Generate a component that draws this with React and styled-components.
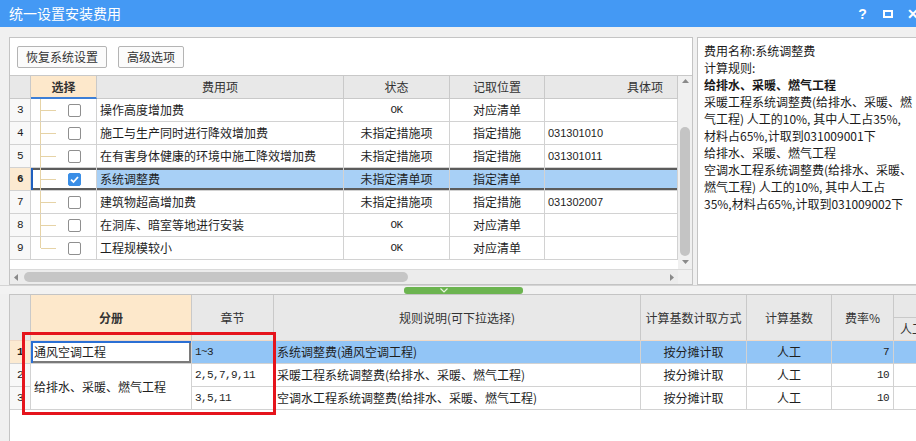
import React from 'react';
import styled, { createGlobalStyle } from 'styled-components';

const CJK = `"Noto Sans CJK SC", "Microsoft YaHei", sans-serif`;
const MONO = `"Liberation Mono", "Noto Sans CJK SC", monospace`;
const LAT = `"Liberation Sans", "Noto Sans CJK SC", sans-serif`;

const Global = createGlobalStyle`
  html, body { margin: 0; padding: 0; background: #f0f0f0; overflow: hidden; }
  body { font-family: ${CJK}; font-size: 12px; color: #222; }
  * { box-sizing: border-box; }
`;

const Window = styled.div`
  width: 916px;
  height: 441px;
  display: flex;
  flex-direction: column;
  overflow: hidden;
  background: #f0f0f0;
`;

const TitleBar = styled.div`
  height: 27px;
  flex: none;
  background: #4499f4;
  display: flex;
  align-items: center;
  padding-left: 9px;
  color: #fff;
  overflow: hidden;
`;

const Title = styled.div`
  flex: 1;
  font-size: 14px;
  line-height: 27px;
`;

const TitleButtons = styled.div`
  display: flex;
  flex: none;
  width: 75px;
  margin-right: -9px;
`;

const TitleButton = styled.div`
  width: 25px;
  height: 27px;
  display: flex;
  align-items: center;
  justify-content: center;
  font-family: ${LAT};
  font-weight: bold;
  font-size: 14px;
  color: #fff;
`;

const Main = styled.div`
  display: flex;
  flex-direction: column;
  padding: 10px 0 0 9px;
  flex: 1;
  min-height: 0;
`;

const TopRow = styled.div`
  display: flex;
  gap: 4px;
  height: 248px;
  flex: none;
`;

const LeftPanel = styled.div`
  width: 684px;
  flex: none;
  border: 1px solid #c4c4c4;
  background: #fff;
  display: flex;
  flex-direction: column;
`;

const Toolbar = styled.div`
  height: 38px;
  flex: none;
  display: flex;
  align-items: flex-start;
  gap: 11px;
  padding: 8px 0 0 7px;
  border-bottom: 1px solid #c8c8c8;
  background: #fff;
`;

const Button = styled.div`
  height: 22px;
  padding: 0 8px;
  border: 1px solid #b4b4b4;
  border-radius: 2px;
  background: #fbfbfb;
  display: flex;
  align-items: center;
  font-size: 12px;
  line-height: 1;
  color: #333;
`;

const GridWrap = styled.div`
  display: flex;
  height: 193px;
  flex: none;
`;

const TopGrid = styled.div`
  display: grid;
  grid-template-columns: 21px 66px 247px 106px 95px 133px;
  grid-auto-rows: 23px;
  align-content: start;
  width: 668px;
  flex: none;
`;

const Cell = styled.div`
  position: relative;
  display: flex;
  align-items: center;
  justify-content: ${p => (p.$align === 'center' ? 'center' : p.$align === 'right' ? 'flex-end' : 'flex-start')};
  padding: 0 ${p => p.$pad ?? 3}px;
  border-right: 1px solid #d2d2d2;
  border-bottom: 1px solid #d2d2d2;
  background: ${p => p.$bg || '#fff'};
  white-space: nowrap;
  overflow: hidden;
  line-height: 16px;
  font-size: ${p => p.$size || 12}px;
  font-family: ${p => (p.$font === 'mono' ? MONO : p.$font === 'lat' ? LAT : CJK)};
  font-weight: ${p => (p.$bold ? 'bold' : 'normal')};
  color: #1e1e1e;
  letter-spacing: ${p => (p.$font === 'mono' ? '-0.6px' : '0')};
  box-shadow: ${p => p.$shadow || 'none'};
`;

const HeadCell = styled(Cell)`
  background: ${p => (p.$active ? '#fde8cb' : '#e8e8e8')};
  border-right: 1px solid #c9c9c9;
  border-bottom: ${p => (p.$active ? '2px solid #3d7fd6' : '1px solid #c9c9c9')};
  color: #333;
  grid-row: ${p => (p.$span ? `span ${p.$span}` : 'auto')};
`;

const TreeGuide = styled.span`
  position: absolute;
  left: 9px;
  top: 0;
  height: ${p => (p.$last ? '50%' : '100%')};
  width: 16px;
  border-left: 1px solid #e6d3a6;
  &::after {
    content: '';
    position: absolute;
    left: 0;
    top: ${p => (p.$last ? '100%' : '50%')};
    width: 15px;
    border-top: 1px solid #e6d3a6;
  }
`;

const CheckBox = styled.span`
  width: 13px;
  height: 13px;
  margin-left: 37px;
  border: 1px solid ${p => (p.$on ? '#3a8ee6' : '#8f8f8f')};
  border-radius: 2px;
  background: ${p => (p.$on ? '#3a8ee6' : '#fff')};
  display: flex;
  align-items: center;
  justify-content: center;
`;

const VScroll = styled.div`
  width: 14px;
  flex: none;
  background: #f0f0f0;
  display: flex;
  flex-direction: column;
  align-items: center;
  padding: 3px 0 2px;
`;

const VThumb = styled.div`
  width: 10px;
  flex: none;
  height: 129px;
  margin: 44px 0 4px;
  border-radius: 5px;
  background: #c4c4c4;
`;

const HScrollRow = styled.div`
  display: flex;
  height: 15px;
  flex: none;
  border-top: 1px solid #dadada;
  background: #ececec;
`;

const HScroll = styled.div`
  width: 668px;
  display: flex;
  align-items: center;
  padding: 0 4px;
`;

const HThumb = styled.div`
  width: 384px;
  height: 10px;
  margin-left: 6px;
  border-radius: 5px;
  background: #c6c6c6;
`;

const Spacer = styled.div`
  flex: 1;
`;

const Corner = styled.div`
  width: 14px;
  background: #f0f0f0;
`;

const InfoPanel = styled.div`
  flex: 1;
  min-width: 0;
  background: #fff;
  border: 1px solid #c4c4c4;
  border-right: none;
  padding: 4px 0 0 6px;
  overflow: hidden;
`;

const InfoLine = styled.div`
  line-height: 17px;
  font-size: 12px;
  white-space: nowrap;
  color: #1a1a1a;
  font-weight: ${p => (p.$bold ? 'bold' : 'normal')};
`;

const Splitter = styled.div`
  height: 9px;
  flex: none;
  padding: 1px 0 0 395px;
  margin-left: -9px;
  padding-left: 404px;
  border-top: 1px solid #d4d4d4;
  background: #f2f2f2;
`;

const Handle = styled.div`
  width: 119px;
  height: 7px;
  border-radius: 3px;
  background: #6cb450;
  display: flex;
  align-items: center;
  padding-left: 36px;
`;

const BottomPanel = styled.div`
  position: relative;
  flex: 1;
  background: #fff;
  border-top: 1px solid #c4c4c4;
  border-left: 1px solid #c4c4c4;
  overflow: hidden;
`;

const BottomGrid = styled.div`
  display: grid;
  grid-template-columns: 21px 161px 82px 367px 106px 85px 62px 100px;
  grid-template-rows: 23px 23px repeat(3, 23px);
  width: 984px;
`;

const BHead = styled(HeadCell)`
  border-bottom: 1px solid ${p => (p.$sub ? '#c9c9c9' : '#efd9c6')};
  justify-content: ${p => (p.$left ? 'flex-start' : 'center')};
`;

const Highlight = styled.div`
  position: absolute;
  left: 12px;
  top: 37px;
  width: 254px;
  height: 83px;
  border: 3px solid #e5141c;
  pointer-events: none;
`;

const Arrow = ({ dir }) => {
  const pts = {
    up: '0,4 3.5,0 7,4',
    down: '0,0 3.5,4 7,0',
    left: '4,0 0,3.5 4,7',
    right: '0,0 4,3.5 0,7',
  }[dir];
  const vertical = dir === 'up' || dir === 'down';
  return (
    <svg width={vertical ? 7 : 4} height={vertical ? 4 : 7} viewBox={vertical ? '0 0 7 4' : '0 0 4 7'}>
      <polygon points={pts} fill="#8a8a8a" />
    </svg>
  );
};

const Tick = () => (
  <svg width="11" height="11" viewBox="0 0 11 11">
    <polyline points="2,5.6 4.5,8 9,3" fill="none" stroke="#fff" strokeWidth="1.8" />
  </svg>
);

const topRows = [
  { n: 3, name: '操作高度增加费', status: 'OK', pos: '对应清单', item: '' },
  { n: 4, name: '施工与生产同时进行降效增加费', status: '未指定措施项', pos: '指定措施', item: '031301010' },
  { n: 5, name: '在有害身体健康的环境中施工降效增加费', status: '未指定措施项', pos: '指定措施', item: '031301011' },
  { n: 6, name: '系统调整费', status: '未指定清单项', pos: '指定清单', item: '', checked: true, current: true },
  { n: 7, name: '建筑物超高增加费', status: '未指定措施项', pos: '指定措施', item: '031302007' },
  { n: 8, name: '在洞库、暗室等地进行安装', status: 'OK', pos: '对应清单', item: '' },
  { n: 9, name: '工程规模较小', status: 'OK', pos: '对应清单', item: '', last: true },
];

const bottomRows = [
  { n: 1, ch: '1~3', rule: '系统调整费(通风空调工程)', way: '按分摊计取', base: '人工', rate: '7', current: true },
  { n: 2, ch: '2,5,7,9,11', rule: '采暖工程系统调整费(给排水、采暖、燃气工程)', way: '按分摊计取', base: '人工', rate: '10' },
  { n: 3, ch: '3,5,11', rule: '空调水工程系统调整费(给排水、采暖、燃气工程)', way: '按分摊计取', base: '人工', rate: '10' },
];

const infoLines = [
  { t: '费用名称:系统调整费' },
  { t: '计算规则:' },
  { t: '给排水、采暖、燃气工程', bold: true },
  { t: '采暖工程系统调整费(给排水、采暖、燃' },
  { t: '气工程) 人工的10%, 其中人工占35%,' },
  { t: '材料占65%,计取到031009001下' },
  { t: '给排水、采暖、燃气工程' },
  { t: '空调水工程系统调整费(给排水、采暖、' },
  { t: '燃气工程) 人工的10%, 其中人工占' },
  { t: '35%,材料占65%,计取到031009002下' },
];

const SEL = '#a8d0f6';
const FOCUS = 'inset 0 2px 0 #5c5c5c, inset 0 -2px 0 #5c5c5c';

export default function App() {
  return (
    <Window>
      <Global />
      <TitleBar>
        <Title>统一设置安装费用</Title>
        <TitleButtons>
          <TitleButton>?</TitleButton>
          <TitleButton>
            <svg width="10" height="8" viewBox="0 0 10 8">
              <rect x="1" y="1" width="8" height="6" fill="none" stroke="#fff" strokeWidth="2" />
            </svg>
          </TitleButton>
          <TitleButton>✕</TitleButton>
        </TitleButtons>
      </TitleBar>
      <Main>
        <TopRow>
          <LeftPanel>
            <Toolbar>
              <Button>恢复系统设置</Button>
              <Button>高级选项</Button>
            </Toolbar>
            <GridWrap>
              <TopGrid>
                <HeadCell />
                <HeadCell $align="center" $bold $active>选择</HeadCell>
                <HeadCell $align="center">费用项</HeadCell>
                <HeadCell $align="center">状态</HeadCell>
                <HeadCell $align="center">记取位置</HeadCell>
                <HeadCell $align="right" $pad={14}>具体项</HeadCell>
                {topRows.map(r => (
                  <React.Fragment key={r.n}>
                    <Cell
                      $align="center"
                      $font="mono"
                      $size={11}
                      $bold={r.current}
                      $bg={r.current ? '#fcead1' : '#f8f8f8'}
                    >
                      {r.n}
                    </Cell>
                    <Cell
                      $pad={0}
                      $shadow={r.current ? `inset 2px 0 0 #1f5fbf, ${FOCUS}` : undefined}
                    >
                      <TreeGuide $last={r.last} />
                      <CheckBox $on={r.checked}>{r.checked && <Tick />}</CheckBox>
                    </Cell>
                    <Cell $bg={r.current ? SEL : undefined} $shadow={r.current ? FOCUS : undefined}>
                      {r.name}
                    </Cell>
                    <Cell
                      $align="center"
                      $font={r.status === 'OK' ? 'mono' : undefined}
                      $size={r.status === 'OK' ? 11 : 12}
                      $bg={r.current ? SEL : undefined}
                      $shadow={r.current ? FOCUS : undefined}
                    >
                      {r.status}
                    </Cell>
                    <Cell $align="center" $bg={r.current ? SEL : undefined} $shadow={r.current ? FOCUS : undefined}>
                      {r.pos}
                    </Cell>
                    <Cell $font="lat" $size={11} $bg={r.current ? SEL : undefined} $shadow={r.current ? FOCUS : undefined}>
                      {r.item}
                    </Cell>
                  </React.Fragment>
                ))}
              </TopGrid>
              <VScroll>
                <Arrow dir="up" />
                <VThumb />
                <Arrow dir="down" />
              </VScroll>
            </GridWrap>
            <Spacer />
            <HScrollRow>
              <HScroll>
                <Arrow dir="left" />
                <HThumb />
                <Spacer />
                <Arrow dir="right" />
              </HScroll>
              <Corner />
            </HScrollRow>
          </LeftPanel>
          <InfoPanel>
            {infoLines.map((l, i) => (
              <InfoLine key={i} $bold={l.bold}>{l.t}</InfoLine>
            ))}
          </InfoPanel>
        </TopRow>
        <Splitter>
          <Handle>
            <svg width="8" height="5" viewBox="0 0 8 5">
              <polyline points="0.5,0.5 4,4 7.5,0.5" fill="none" stroke="#e8f5e0" strokeWidth="1.2" />
            </svg>
          </Handle>
        </Splitter>
        <BottomPanel>
          <BottomGrid>
            <BHead $span={2} />
            <BHead $span={2} $bold $active>分册</BHead>
            <BHead $span={2}>章节</BHead>
            <BHead $span={2}>规则说明(可下拉选择)</BHead>
            <BHead $span={2}>计算基数计取方式</BHead>
            <BHead $span={2}>计算基数</BHead>
            <BHead $span={2}>费率%</BHead>
            <BHead $sub />
            <BHead $left $pad={6}>人工</BHead>
            {bottomRows.map(r => {
              const bg = r.current ? '#92c5f6' : undefined;
              return (
                <React.Fragment key={r.n}>
                  <Cell
                    $align="center"
                    $font="mono"
                    $size={11}
                    $bold={r.current}
                    $bg={r.current ? '#fcead1' : '#f8f8f8'}
                  >
                    {r.n}
                  </Cell>
                  {r.n === 1 && (
                    <Cell $shadow="inset 2px 2px 0 #2a6fd4, inset -2px -2px 0 #7a7a7a">通风空调工程</Cell>
                  )}
                  {r.n === 2 && (
                    <Cell style={{ gridRow: 'span 2', height: 'auto' }}>给排水、采暖、燃气工程</Cell>
                  )}
                  <Cell $font="mono" $size={11} $bg={bg}>{r.ch}</Cell>
                  <Cell $bg={bg}>{r.rule}</Cell>
                  <Cell $align="center" $bg={bg}>{r.way}</Cell>
                  <Cell $align="center" $bg={bg}>{r.base}</Cell>
                  <Cell $align="right" $font="mono" $size={11} $pad={4} $bg={bg}>{r.rate}</Cell>
                  <Cell $bg={bg} />
                </React.Fragment>
              );
            })}
          </BottomGrid>
          <Highlight />
        </BottomPanel>
      </Main>
    </Window>
  );
}
